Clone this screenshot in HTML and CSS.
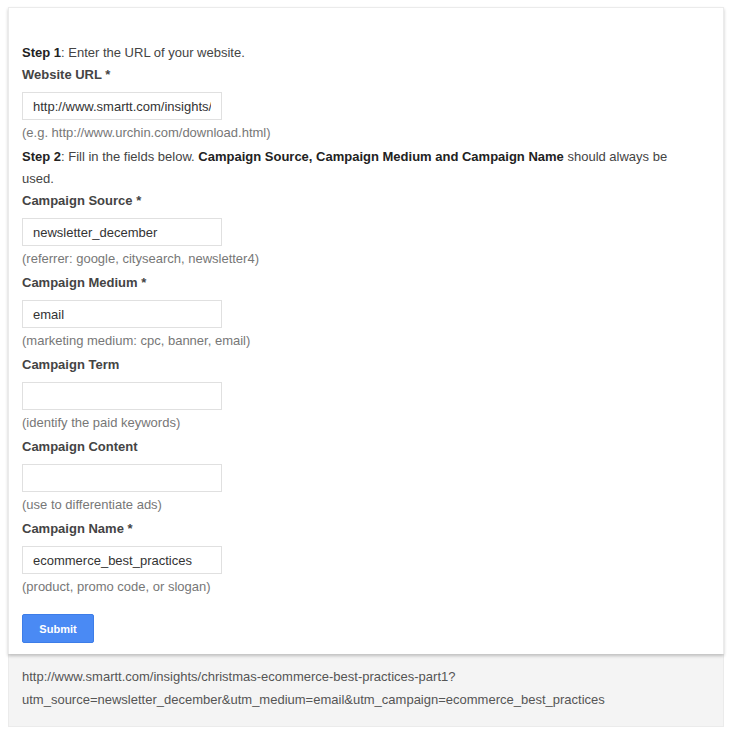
FILE: index.html
```html
<!DOCTYPE html>
<html>
<head>
<meta charset="utf-8">
<link rel="stylesheet" href="styles.css">
</head>
<body>
<div class="wrap">
  <form class="card">
    <p class="step"><b>Step 1</b>: Enter the URL of your website.</p>
    <div class="field">
      <label class="label">Website URL *</label>
      <input class="input" type="text" value="http://www.smartt.com/insights/christmas-ecommerce-best-practices-part1">
      <p class="hint">(e.g. http://www.urchin.com/download.html)</p>
    </div>
    <p class="step step2"><b>Step 2</b>: Fill in the fields below. <b>Campaign Source, Campaign Medium and Campaign Name</b> should always be used.</p>
    <div class="field">
      <label class="label">Campaign Source *</label>
      <input class="input" type="text" value="newsletter_december">
      <p class="hint">(referrer: google, citysearch, newsletter4)</p>
    </div>
    <div class="field">
      <label class="label">Campaign Medium *</label>
      <input class="input" type="text" value="email">
      <p class="hint">(marketing medium: cpc, banner, email)</p>
    </div>
    <div class="field">
      <label class="label">Campaign Term</label>
      <input class="input" type="text" value="">
      <p class="hint">(identify the paid keywords)</p>
    </div>
    <div class="field">
      <label class="label">Campaign Content</label>
      <input class="input" type="text" value="">
      <p class="hint">(use to differentiate ads)</p>
    </div>
    <div class="field">
      <label class="label">Campaign Name *</label>
      <input class="input" type="text" value="ecommerce_best_practices">
      <p class="hint">(product, promo code, or slogan)</p>
    </div>
    <button class="btn" type="button">Submit</button>
  </form>
  <div class="result">http://www.smartt.com/insights/christmas-ecommerce-best-practices-part1?<br>utm_source=newsletter_december&amp;utm_medium=email&amp;utm_campaign=ecommerce_best_practices</div>
</div>
</body>
</html>
```

FILE: styles.css
```css
html, body {
  margin: 0;
  padding: 0;
  background: #fff;
}
body {
  padding: 7px 0 0 8px;
  font-family: "Liberation Sans", Arial, sans-serif;
  font-size: 13px;
  line-height: 22px;
  color: #444;
}
.wrap {
  width: 716px;
}
.card {
  position: relative;
  z-index: 1;
  display: flex;
  flex-direction: column;
  align-items: flex-start;
  background: #fff;
  border: 1px solid #ebebeb;
  border-bottom: none;
  padding: 34px 13px 11px;
  box-shadow: 0 2px 3px rgba(0, 0, 0, 0.22);
}
.step {
  margin: 0;
  color: #444;
}
.step b {
  color: #222;
}
.step2 {
  width: 670px;
}
.field {
  display: flex;
  flex-direction: column;
  align-items: flex-start;
}
.label {
  font-weight: bold;
  color: #444;
  margin-bottom: 6px;
}
.input {
  box-sizing: border-box;
  width: 200px;
  height: 28px;
  margin: 0;
  padding: 0 10px;
  border: 1px solid #e0e0e0;
  border-radius: 0;
  font-family: "Liberation Sans", Arial, sans-serif;
  font-size: 13px;
  color: #333;
  background: #fff;
  outline: none;
}
.hint {
  margin: 2px 0 2px;
  color: #777;
}
.btn {
  margin-top: 14px;
  width: 72px;
  height: 29px;
  border: 1px solid #3d7de8;
  border-radius: 2px;
  background: #4a8af4;
  color: #fff;
  font-family: "Liberation Sans", Arial, sans-serif;
  font-size: 11px;
  font-weight: bold;
  padding: 0;
  cursor: pointer;
}
.result {
  background: #f4f4f4;
  border: 1px solid #ebebeb;
  border-top: none;
  padding: 11px 13px 15px;
  color: #555;
  line-height: 23px;
}
```
